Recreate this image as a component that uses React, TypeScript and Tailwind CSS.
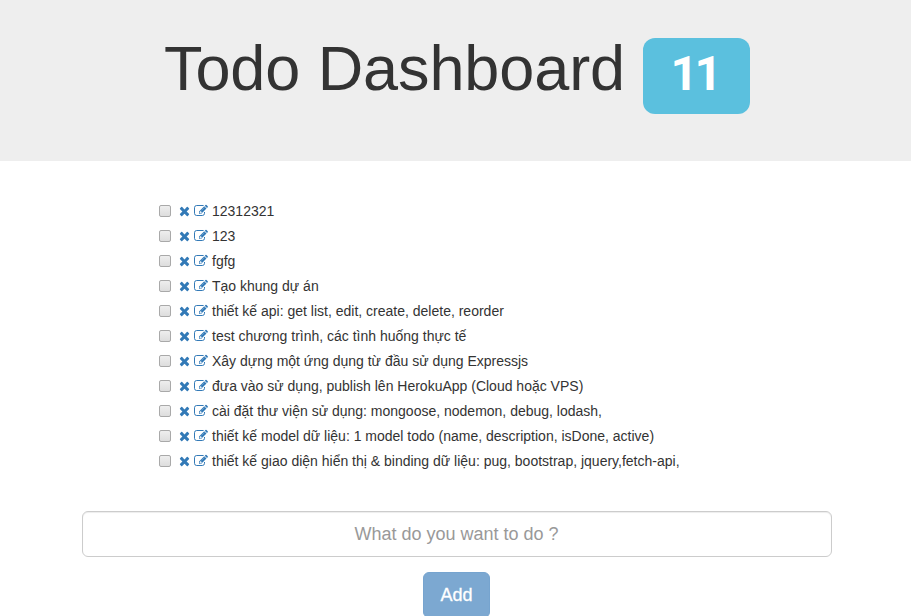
const todos = [
  "12312321",
  "123",
  "fgfg",
  "Tạo khung dự án",
  "thiết kế api: get list, edit, create, delete, reorder",
  "test chương trình, các tình huống thực tế",
  "Xây dựng một ứng dụng từ đầu sử dụng Expressjs",
  "đưa vào sử dụng, publish lên HerokuApp (Cloud hoặc VPS)",
  "cài đặt thư viện sử dụng: mongoose, nodemon, debug, lodash,",
  "thiết kế model dữ liệu: 1 model todo (name, description, isDone, active)",
  "thiết kế giao diện hiển thị & binding dữ liệu: pug, bootstrap, jquery,fetch-api,",
];

function CloseIcon() {
  return (
    <svg viewBox="0 0 1408 1792" className="h-[14px] w-[11px] fill-[#337ab7]">
      <path d="M1298 1322q0 40-28 68l-136 136q-28 28-68 28t-68-28l-294-294-294 294q-28 28-68 28t-68-28l-136-136q-28-28-28-68t28-68l294-294-294-294q-28-28-28-68t28-68l136-136q28-28 68-28t68 28l294 294 294-294q28-28 68-28t68 28l136 136q28 28 28 68t-28 68l-294 294 294 294q28 28 28 68z" />
    </svg>
  );
}

function EditIcon() {
  return (
    <svg viewBox="0 0 14 14" className="h-[14px] w-[14px]">
      <path
        d="M9.6 1.5H2.700a2.200 2.200 0 0 0-2.200 2.200v5.600a2.200 2.200 0 0 0 2.200 2.200h5.600a2.200 2.200 0 0 0 2.200-2.200V8"
        fill="none"
        stroke="#337ab7"
        strokeWidth="1"
      />
      <path
        d="M5 9.750V7.500l5.250-5.250 2.250 2.250-5.250 5.250zM10.750 1.750l.72-.72q.53-.44 1.060 0l1.190 1.190q.44.53 0 1.060l-.72.72z"
        fill="#337ab7"
      />
      <path d="M5.750 8v.75h.75v.5h.4l.9-.9-1.200-1.200zM7.600 6.400l2.800-2.800" fill="#fff" stroke="#fff" strokeWidth="0.25" />
    </svg>
  );
}

export default function App() {
  return (
    <div className="h-[616px] overflow-hidden bg-white font-['Liberation_Sans',Arial,sans-serif] text-[14px] leading-5 text-[#333]">
      <header className="flex h-[161px] justify-center bg-[#eee] pt-[38px] pl-[3px]">
        <h1 className="mr-[18px] -mt-px h-[76px] text-[63px] leading-[63px] tracking-[-0.1px]">Todo Dashboard</h1>
        <span className="flex h-[76px] w-[107px] justify-center rounded-[12px] bg-[#5bc0de] pt-[12px] pr-[4px] font-[Roboto,sans-serif] text-[48px] leading-[47px] font-bold tracking-[-3.6px] text-white">
          11
        </span>
      </header>
      <ul className="mt-[37px] ml-[159px]">
        {todos.map((todo) => (
          <li key={todo} className="flex h-[25px] items-center whitespace-nowrap">
            <input
              type="checkbox"
              className="mr-[8px] h-[12px] w-[12px] appearance-none rounded-[2px] border border-[#a9a9a9] bg-linear-to-b from-[#eee] to-[#ddd]"
            />
            <a className="mr-[4px]"><CloseIcon /></a>
            <a className="mr-[4px]"><EditIcon /></a>
            <span>{todo}</span>
          </li>
        ))}
      </ul>
      <form className="mt-[38px] flex flex-col items-center">
        <input
          placeholder="What do you want to do ?"
          className="ml-[3px] h-[46px] w-[750px] rounded-[6px] border border-[#ccc] pr-px text-center text-[18px] shadow-[inset_0_1px_1px_rgba(0,0,0,0.075)] placeholder:text-[#999]"
        />
        <button
          type="button"
          className="mt-[15px] ml-[2px] h-[46px] w-[67px] rounded-[6px] border border-[#76a4cf] bg-[#7ca8d1] text-[18px] text-white [-webkit-text-stroke:0.3px_white]"
        >
          Add
        </button>
      </form>
    </div>
  );
}
